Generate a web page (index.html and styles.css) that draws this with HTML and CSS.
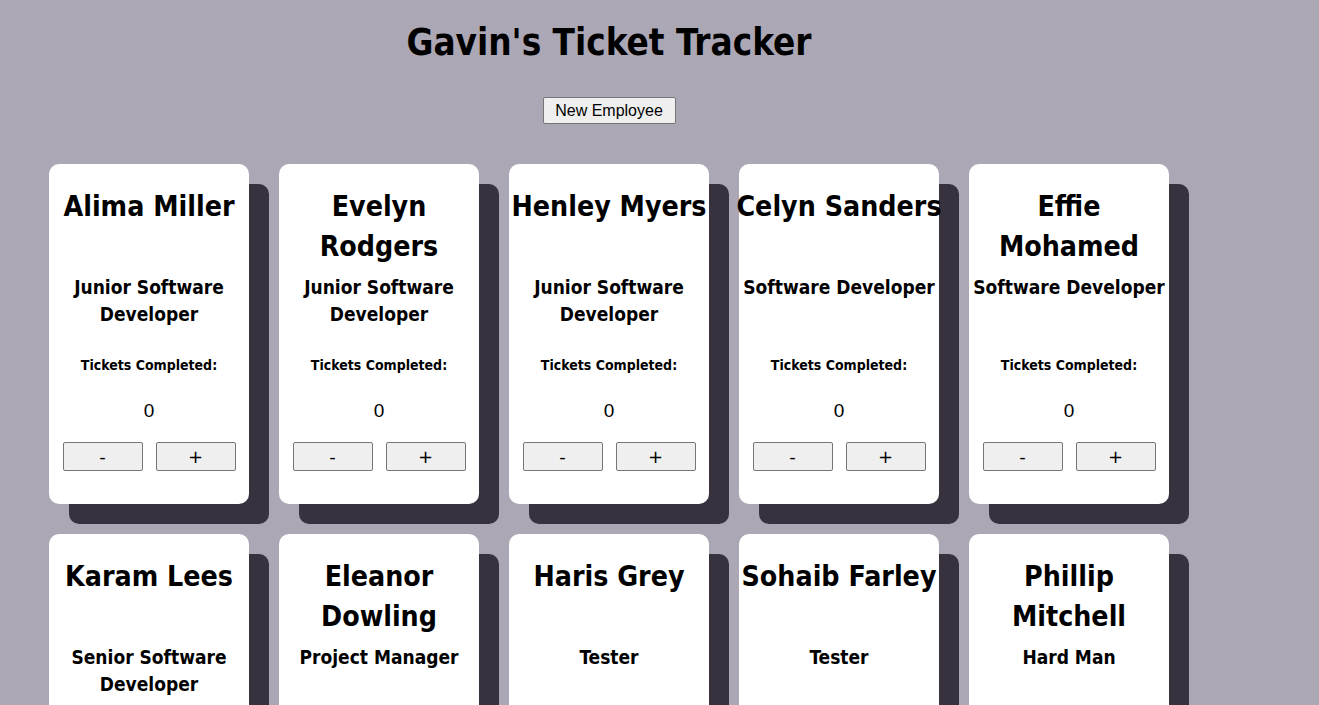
FILE: index.html
```html
<!DOCTYPE html>
<html>
<head>
<meta charset="utf-8">
<title>Gavin's Ticket Tracker</title>
<link rel="stylesheet" href="styles.css">
</head>
<body>
<div class="page">
  <header class="header">
    <h1 class="title">Gavin's Ticket Tracker</h1>
    <button class="new-btn">New Employee</button>
  </header>
  <main class="grid">
    <div class="card"><h2 class="name">Alima Miller</h2><h3 class="role">Junior Software Developer</h3><h4 class="label">Tickets Completed:</h4><p class="count">0</p><div class="controls"><button class="ctl">-</button><button class="ctl">+</button></div></div>
    <div class="card"><h2 class="name">Evelyn Rodgers</h2><h3 class="role">Junior Software Developer</h3><h4 class="label">Tickets Completed:</h4><p class="count">0</p><div class="controls"><button class="ctl">-</button><button class="ctl">+</button></div></div>
    <div class="card"><h2 class="name">Henley Myers</h2><h3 class="role">Junior Software Developer</h3><h4 class="label">Tickets Completed:</h4><p class="count">0</p><div class="controls"><button class="ctl">-</button><button class="ctl">+</button></div></div>
    <div class="card"><h2 class="name">Celyn Sanders</h2><h3 class="role">Software Developer</h3><h4 class="label">Tickets Completed:</h4><p class="count">0</p><div class="controls"><button class="ctl">-</button><button class="ctl">+</button></div></div>
    <div class="card"><h2 class="name">Effie Mohamed</h2><h3 class="role">Software Developer</h3><h4 class="label">Tickets Completed:</h4><p class="count">0</p><div class="controls"><button class="ctl">-</button><button class="ctl">+</button></div></div>
    <div class="card"><h2 class="name">Karam Lees</h2><h3 class="role">Senior Software Developer</h3><h4 class="label">Tickets Completed:</h4><p class="count">0</p><div class="controls"><button class="ctl">-</button><button class="ctl">+</button></div></div>
    <div class="card"><h2 class="name">Eleanor Dowling</h2><h3 class="role">Project Manager</h3><h4 class="label">Tickets Completed:</h4><p class="count">0</p><div class="controls"><button class="ctl">-</button><button class="ctl">+</button></div></div>
    <div class="card"><h2 class="name">Haris Grey</h2><h3 class="role">Tester</h3><h4 class="label">Tickets Completed:</h4><p class="count">0</p><div class="controls"><button class="ctl">-</button><button class="ctl">+</button></div></div>
    <div class="card"><h2 class="name">Sohaib Farley</h2><h3 class="role">Tester</h3><h4 class="label">Tickets Completed:</h4><p class="count">0</p><div class="controls"><button class="ctl">-</button><button class="ctl">+</button></div></div>
    <div class="card"><h2 class="name">Phillip Mitchell</h2><h3 class="role">Hard Man</h3><h4 class="label">Tickets Completed:</h4><p class="count">0</p><div class="controls"><button class="ctl">-</button><button class="ctl">+</button></div></div>
  </main>
</div>
</body>
</html>
```
FILE: styles.css
```css
html, body {
  margin: 0;
  padding: 0;
  background: #aba7b5;
}
body {
  font-family: "DejaVu Sans Condensed", "DejaVu Sans", sans-serif;
  font-stretch: condensed;
  color: #000;
}
.page {
  width: 1120px;
  padding-left: 49px;
  padding-bottom: 40px;
}
.header {
  display: flex;
  flex-direction: column;
  align-items: center;
}
.title {
  margin: 0;
  padding-top: 20px;
  font-size: 36.5px;
  line-height: 46px;
  font-weight: bold;
}
.new-btn {
  margin-top: 31px;
  width: 133px;
  height: 27px;
  padding: 0;
  font-family: "Liberation Sans", Arial, sans-serif;
  font-stretch: normal;
  font-size: 16px;
  color: #000;
  background: #efefef;
  border: 1px solid #767676;
  border-radius: 2px;
}
.grid {
  margin-top: 40px;
  display: grid;
  grid-template-columns: repeat(5, 200px);
  gap: 30px;
}
.card {
  width: 200px;
  height: 340px;
  box-sizing: border-box;
  padding-top: 23px;
  background: #fff;
  border-radius: 10px;
  box-shadow: 20px 20px 0 #38323f;
  display: flex;
  flex-direction: column;
  align-items: center;
  text-align: center;
}
.name {
  margin: 0 -4px;
  height: 87px;
  font-size: 28.3px;
  line-height: 40px;
  font-weight: bold;
}
.role {
  margin: 0;
  height: 54px;
  font-size: 19px;
  line-height: 27px;
  font-weight: bold;
}
.label {
  margin: 0;
  margin-top: 28px;
  font-size: 14px;
  line-height: 18px;
  font-weight: bold;
}
.count {
  margin: 0;
  margin-top: 26px;
  font-family: "Liberation Sans", Arial, sans-serif;
  font-stretch: normal;
  font-size: 19px;
  line-height: 22px;
}
.controls {
  margin-top: 20px;
  display: flex;
  gap: 13px;
}
.ctl {
  width: 80px;
  height: 29px;
  padding: 0;
  font-family: "DejaVu Sans", sans-serif;
  font-size: 18px;
  color: #000;
  background: #efefef;
  border: 1px solid #767676;
  border-radius: 2px;
}
```
